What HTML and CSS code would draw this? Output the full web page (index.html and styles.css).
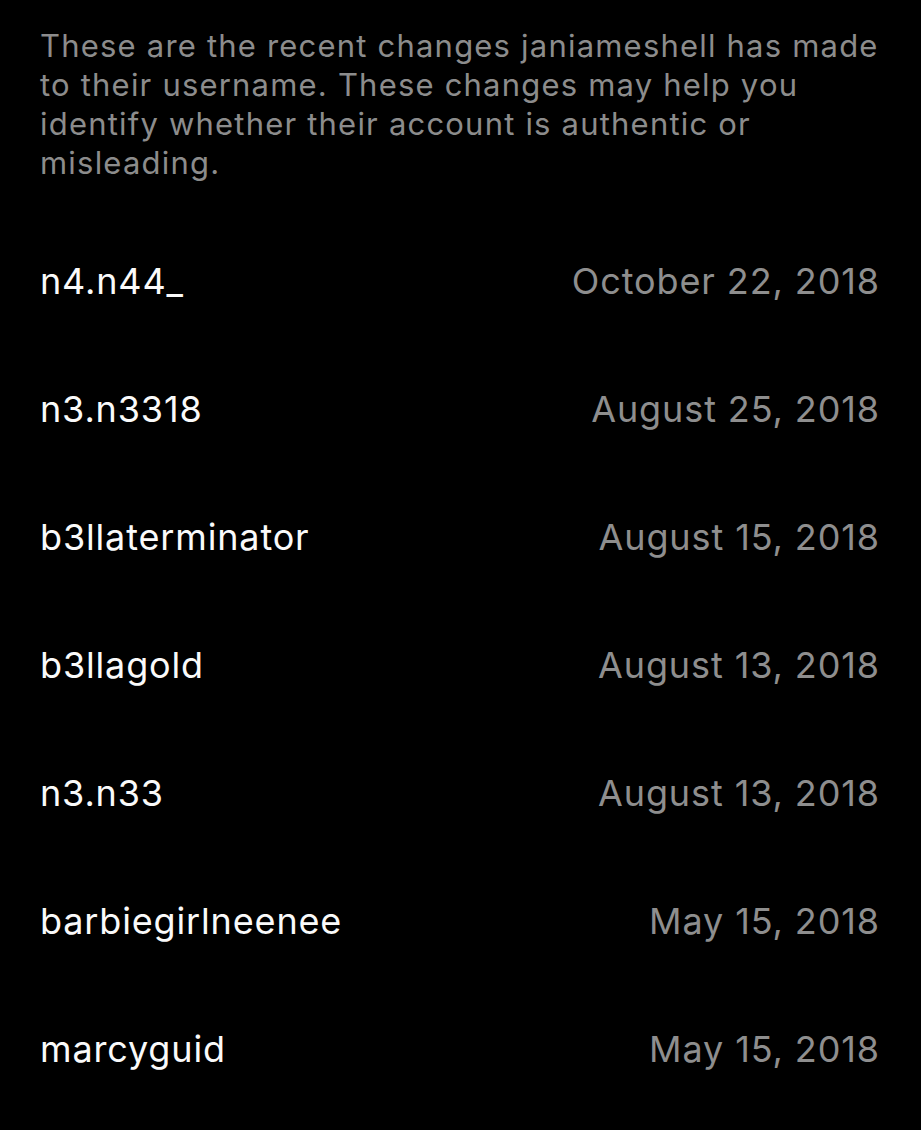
FILE: index.html
```html
<!DOCTYPE html>
<html>
<head>
<meta charset="utf-8">
<link rel="stylesheet" href="styles.css">
</head>
<body>
<main class="page">
  <p class="intro">These are the recent changes janiameshell has made to their username. These changes may help you identify whether their account is authentic or misleading.</p>
  <ul class="list">
    <li class="row"><span class="name">n4.n44_</span><span class="date">October 22, 2018</span></li>
    <li class="row"><span class="name">n3.n3318</span><span class="date">August 25, 2018</span></li>
    <li class="row"><span class="name">b3llaterminator</span><span class="date">August 15, 2018</span></li>
    <li class="row"><span class="name">b3llagold</span><span class="date">August 13, 2018</span></li>
    <li class="row"><span class="name">n3.n33</span><span class="date">August 13, 2018</span></li>
    <li class="row"><span class="name">barbiegirlneenee</span><span class="date">May 15, 2018</span></li>
    <li class="row"><span class="name">marcyguid</span><span class="date">May 15, 2018</span></li>
  </ul>
</main>
</body>
</html>
```
FILE: styles.css
```css
html, body {
  margin: 0;
  padding: 0;
  background: #000;
}
body {
  font-family: Inter, "Noto Sans", sans-serif;
  -webkit-font-smoothing: antialiased;
}
.page {
  padding: 26px 41px 0 40px;
}
.intro {
  margin: 0;
  font-size: 31px;
  line-height: 39px;
  color: #8c8c8c;
  letter-spacing: 1.2px;
}
.list {
  list-style: none;
  margin: 35px 0 0;
  padding: 0;
}
.row {
  height: 128px;
  display: flex;
  align-items: center;
  justify-content: space-between;
}
.name {
  font-size: 36px;
  letter-spacing: 0.85px;
  color: #fafafa;
}
.date {
  font-size: 36px;
  letter-spacing: 0.9px;
  color: #8e8e8e;
}
```
